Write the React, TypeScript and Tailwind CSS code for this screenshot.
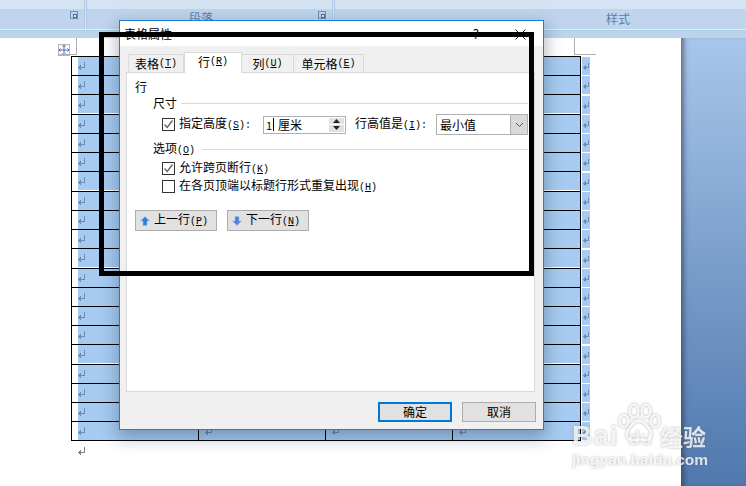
const cjk = { fontFamily: '"Noto Sans CJK SC", "Liberation Sans", sans-serif' };

const rowHeights = [
  'h-[19px]','h-[19px]','h-[20px]','h-[19px]','h-[19px]','h-[19px]','h-[20px]','h-[19px]','h-[19px]','h-[19px]',
  'h-[20px]','h-[19px]','h-[19px]','h-[19px]','h-[19px]','h-[20px]','h-[19px]','h-[19px]','h-[19px]','h-[19px]',
];

function Ret({ className = 'text-[#6c8cb3]' }: { className?: string }) {
  return (
    <svg width="8" height="9" viewBox="0 0 8 9" className={className} shapeRendering="crispEdges">
      <path fill="currentColor" d="M6 0h1v6H3V5h3zM2 3h1v5H2zM1 4h1v3H1zM0 5h1v1H0z" />
    </svg>
  );
}

function Hot({ k, suffix = '' }: { k: string; suffix?: string }) {
  return (
    <span className="text-[10px]" style={{ fontFamily: '"Liberation Mono", monospace' }}>
      (<span className="underline">{k}</span>){suffix}
    </span>
  );
}

function Check({ on }: { on?: boolean }) {
  return (
    <span className="flex w-[13px] h-[13px] shrink-0 items-center justify-center border border-[#333] bg-white">
      {on && (
        <svg width="11" height="11" viewBox="0 0 11 11">
          <path d="M1.500 5.500 4.200 8.500 9.500 1.500" fill="none" stroke="#666" strokeWidth="1.400" />
        </svg>
      )}
    </span>
  );
}

function Group({ title, lineGap }: { title: React.ReactNode; lineGap: string }) {
  return (
    <div className={`flex items-center ${lineGap}`}>
      <span>{title}</span>
      <span className="flex-1 h-px bg-[#d9d9d9]" />
    </div>
  );
}

function Launcher() {
  return (
    <svg width="9" height="9" viewBox="0 0 9 9" shapeRendering="crispEdges">
      <path fill="none" stroke="#6f8fb5" d="M.5.5h7v7h-7z" />
      <path fill="#4f6f98" d="M3 3h4v4H3z" />
      <path fill="#dfe9f5" d="M4 4h2v2H4z" />
    </svg>
  );
}

function Ribbon() {
  return (
    <div className="relative h-[38px] shrink-0 bg-[#bdd3ec] overflow-hidden">
      <div className="flex h-[29px] bg-gradient-to-b from-[#d5e4f3] from-30% to-[#c0d5ed] to-30%">
        <div className="w-[84px] h-full flex items-end justify-end pb-[9px] pr-[5px]"><Launcher /></div>
        <div className="w-[3px] h-full bg-[#dbe7f4] border-x border-[#aec6e2]" />
        <div className="w-[245px] h-full relative flex items-end justify-end pb-[9px] pr-[5px]">
          <span className="absolute left-[102px] top-[9px] text-[12px] text-[#5a7ea8]" style={cjk}>段落</span>
          <Launcher />
        </div>
        <div className="w-[3px] h-full bg-[#dbe7f4] border-x border-[#aec6e2]" />
        <div className="flex-1 relative">
          <span className="absolute left-[271px] top-[10px] text-[12px] text-[#5a7ea8]" style={cjk}>样式</span>
        </div>
      </div>
      <div className="h-[1px] bg-[#dff2f7]" />
      <div className="h-[1px] bg-[#a9cfe6]" />
    </div>
  );
}

function Row({ className }: { className: string }) {
  return (
    <div className={`flex ${className}`}>
      <div className="w-[127px] h-full border-l border-t border-black pl-[6px] shrink-0">
        <div className="h-[18px] w-full bg-[#a7cbf0] flex items-center"><Ret /></div>
      </div>
      {['w-[127px]', 'w-[127px]', 'w-[128px]'].map((w, i) => (
        <div key={i} className={`${w} h-full border-l border-t border-black shrink-0`}>
          <div className="h-[18px] w-full bg-[#a7cbf0] flex items-center pl-[6px]"><Ret /></div>
        </div>
      ))}
      <div className="w-[10px] h-full border-l border-black flex flex-col justify-end shrink-0">
        <div className="h-[18px] ml-[1px] bg-[#a7cbf0] flex items-center pl-[1px]"><Ret /></div>
      </div>
    </div>
  );
}

function Page() {
  return (
    <div className="relative flex-1 flex min-h-0">
      <div className="relative w-[681px] h-full bg-white pt-[18px] pl-[71px]">
        <div className="absolute left-[58px] top-[6px] w-[12px] h-[12px] border border-[#b5b5b5] bg-white flex items-center justify-center text-[#3d6cc0]">
          <svg width="10" height="10" viewBox="0 0 10 10"><path d="M5 0v10M0 5h10M3.500 1.500 5 0l1.500 1.500M3.500 8.500 5 10l1.500-1.500M1.500 3.500 0 5l1.500 1.500M8.500 3.500 10 5 8.500 6.500" fill="none" stroke="currentColor" /></svg>
        </div>
        <div className="absolute left-[58px] top-0 w-[19px] h-[17px] border-r border-b border-[#b0b0b0]" />
        <div className="absolute left-[574px] top-0 w-[22px] h-[17px] border-l border-b border-[#b0b0b0]" />
        <div className="w-[520px]">
          {rowHeights.map((h, i) => <Row key={i} className={h} />)}
          <div className="w-[510px] h-px bg-black" />
        </div>
        <div className="pl-[7px] pt-[6px] flex"><Ret className="text-[#808080]" /></div>
      </div>
      <div className="flex-1 bg-gradient-to-b from-[#a8c6ea] to-[#4f78ad] shadow-[inset_6px_0_5px_-3px_rgba(40,50,70,0.55)]" />
    </div>
  );
}

function Tab({ label, k, w, active }: { label: string; k: string; w: string; active?: boolean }) {
  return active ? (
    <div className={`${w} h-[21px] -mb-px z-10 border border-b-0 border-[#d9d9d9] bg-white flex items-center justify-center pb-[3px]`}>
      {label}<Hot k={k} />
    </div>
  ) : (
    <div className={`${w} h-[18px] border-t border-r border-[#d9d9d9] first:border-l bg-[#f0f0f0] flex items-center justify-center`}>
      {label}<Hot k={k} />
    </div>
  );
}

function ArrowBtn({ dir, label, k }: { dir: 'up' | 'down'; label: string; k: string }) {
  return (
    <div className="w-[82px] h-[21px] bg-[#e1e1e1] border border-[#adadad] flex items-center pl-[4px] gap-[4px]">
      <svg width="10" height="10" viewBox="0 0 10 10">
        <path d={dir === 'up' ? 'M5 .5 9.500 5H7v4.500H3V5H.5z' : 'M3 .5h4V5h2.500L5 9.500.5 5H3z'} fill={dir === 'up' ? '#2f7fdc' : '#4a83d8'} stroke="#9dc0ea" strokeWidth=".5" />
      </svg>
      <span>{label}<Hot k={k} /></span>
    </div>
  );
}

function Dialog() {
  return (
    <div
      className="absolute left-[119px] top-[20px] w-[425px] h-[410px] border border-[#1a7fd6] bg-[#f0f0f0] flex flex-col text-[12px] leading-[14px] text-black shadow-[0_6px_16px_2px_rgba(20,40,70,0.32)]"
      style={cjk}
    >
      <div className="h-[25px] shrink-0 bg-white flex items-center px-[4px] pt-[1px]">
        <span className="flex-1">表格属性</span>
        <span className="mr-[36px] text-[13px]">?</span>
        <svg width="11" height="11" viewBox="0 0 11 11" className="mr-[13px]"><path d="M.5.5l10 10M10.500.5l-10 10" stroke="#222" fill="none" /></svg>
      </div>
      <div className="flex items-end h-[26px] shrink-0 pl-[8px]">
        <Tab label="表格" k="T" w="w-[56px]" />
        <Tab label="行" k="R" w="w-[58px]" active />
        <Tab label="列" k="U" w="w-[52px]" />
        <Tab label="单元格" k="E" w="w-[70px]" />
      </div>
      <div className="ml-[6px] w-[409px] h-[320px] shrink-0 border border-[#d9d9d9] bg-white pl-[8px] pr-[6px] pt-[7px]">
        <div>行</div>
        <div className="pl-[18px] pt-[2px]">
          <Group title="尺寸" lineGap="gap-[4px]" />
          <div className="flex items-center pl-[9px] mt-[4px] h-[21px]">
            <Check on />
            <span className="ml-[4px] w-[84px]">指定高度<Hot k="S" suffix=":" /></span>
            <div className="w-[83px] h-[18px] border border-[#b0b0b0] flex items-center pl-[2px]">
              <span className="text-[11px]">1</span>
              <span className="w-px h-[13px] bg-black mx-[1px]" />
              <span className="ml-[3px]">厘米</span>
              <div className="ml-auto mr-[1px] w-[15px] h-[14px] flex flex-col gap-px">
                <div className="h-[6px] bg-[#e1e1e1] flex items-center justify-center"><svg width="7" height="4" viewBox="0 0 7 4"><path d="M3.500 0 7 4H0z" fill="#222" /></svg></div>
                <div className="h-[7px] bg-[#e1e1e1] flex items-center justify-center"><svg width="7" height="4" viewBox="0 0 7 4"><path d="M3.500 4 7 0H0z" fill="#222" /></svg></div>
              </div>
            </div>
            <span className="ml-[9px] w-[81px]">行高值是<Hot k="I" suffix=":" /></span>
            <div className="w-[92px] h-[21px] border border-[#b0b0b0] flex items-center pl-[3px]">
              <span className="flex-1 text-[12px]">最小值</span>
              <div className="w-[17px] h-full bg-[#d9d9d9] border-l border-[#b0b0b0] flex items-center justify-center">
                <svg width="9" height="6" viewBox="0 0 9 6"><path d="M1 1l3.500 3.500L8 1" fill="none" stroke="#555" /></svg>
              </div>
            </div>
          </div>
          <div className="mt-[6px]"><Group title={<>选项<Hot k="O" /></>} lineGap="gap-[7px]" /></div>
          <div className="flex items-center gap-[4px] pl-[9px] mt-[3px] h-[14px]"><Check on /><span>允许跨页断行<Hot k="K" /></span></div>
          <div className="flex items-center gap-[4px] pl-[9px] mt-[4px] h-[14px]"><Check /><span className="whitespace-nowrap">在各页顶端以标题行形式重复出现<Hot k="H" /></span></div>
        </div>
        <div className="flex gap-[10px] mt-[17px]">
          <ArrowBtn dir="up" label="上一行" k="P" />
          <ArrowBtn dir="down" label="下一行" k="N" />
        </div>
      </div>
      <div className="flex justify-end gap-[10px] pr-[7px] pt-[10px]">
        <button className="w-[74px] h-[20px] bg-[#e1e1e1] border-2 border-[#0078d7] flex items-center justify-center">确定</button>
        <button className="w-[74px] h-[20px] bg-[#e1e1e1] border border-[#adadad] flex items-center justify-center">取消</button>
      </div>
    </div>
  );
}

function Watermark() {
  return (
    <div className="absolute left-[572px] top-[405px] w-[136px] h-[68px] text-white" style={{ filter: 'drop-shadow(0 0 1px rgba(90,90,90,0.55))' }}>
      <svg className="absolute left-[44px] top-[-2px]" width="46" height="42" viewBox="0 0 46 42">
        <g fill="none" stroke="#fff" strokeWidth="2.500" opacity="0.85">
          <ellipse cx="8" cy="18" rx="4.500" ry="6" />
          <ellipse cx="18" cy="8" rx="4.500" ry="6.500" />
          <ellipse cx="30" cy="8" rx="4.500" ry="6.500" />
          <ellipse cx="39" cy="18" rx="4.500" ry="6" />
          <path d="M23 18c-6 0-8 5-11 9-3 5 0 11 6 10 3-.5 7-1 10 0 6 1 9-5 6-10-3-4-5-9-11-9z" />
        </g>
      </svg>
      <span className="absolute left-0 top-[17px] text-[28px] leading-[28px] font-bold opacity-80 tracking-[1px]" style={{ fontFamily: '"Liberation Sans", sans-serif' }}>Bai</span>
      <span className="absolute left-[56px] top-[20px] text-[20px] leading-[26px] font-bold opacity-70" style={{ fontFamily: '"Liberation Sans", sans-serif' }}>du</span>
      <span className="absolute left-[88px] top-[18px] text-[23px] leading-[26px] font-bold opacity-80" style={cjk}>经验</span>
      <span className="absolute left-0 top-[46px] text-[15.500px] leading-[18px] font-bold opacity-80 whitespace-nowrap" style={{ fontFamily: '"Liberation Sans", sans-serif' }}>jingyan.baidu.com</span>
    </div>
  );
}

export default function App() {
  return (
    <div className="relative w-[746px] h-[486px] overflow-hidden flex flex-col bg-white">
      <Ribbon />
      <Page />
      <Dialog />
      <div className="absolute left-[99px] top-[32px] w-[435px] h-[244px] border-[5px] border-black" />
      <Watermark />
    </div>
  );
}
